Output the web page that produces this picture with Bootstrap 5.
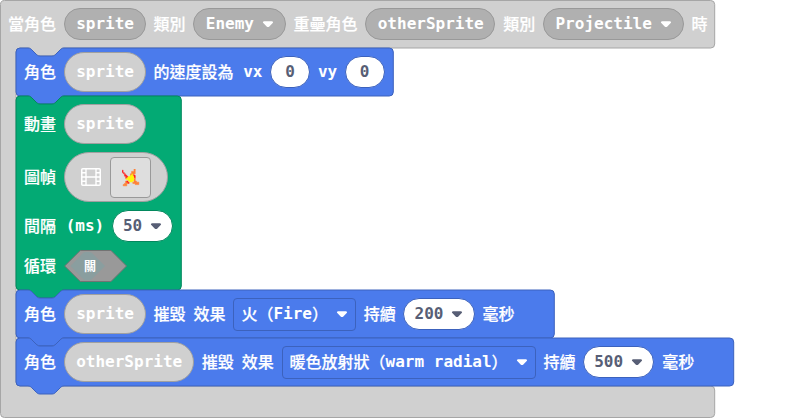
<!DOCTYPE html>
<html lang="zh-Hant">
<head>
<meta charset="utf-8">
<meta name="viewport" content="width=device-width, initial-scale=1">
<title>Blocks</title>
<link rel="stylesheet" href="https://cdn.jsdelivr.net/npm/bootstrap@5.3.0/dist/css/bootstrap.min.css">
<style>
body{background:#fff;font:600 16px/24px "DejaVu Sans Mono","Noto Sans CJK TC",monospace;color:#fff;overflow:hidden;white-space:nowrap}
.workspace{width:786px;height:418px}
.shape{position:absolute;left:0;top:0;overflow:visible;pointer-events:none}
.line{gap:7.9px;position:relative}
.zh{font-family:"Noto Sans CJK TC",sans-serif;font-weight:500;-webkit-text-stroke:.2px currentColor;line-height:22px;margin-bottom:2px}
.hat{height:48px;padding-left:8px}
.stack-in{padding-left:16px}
.stmt{height:48px;padding-left:8px}
.green-stmt{height:194px;padding:8px 0 8px 8px;gap:8px}
.pill{height:32px;padding:0 10.7px 0 11.3px;border:1px solid #999;border-radius:20px;background:#b0b0b0;gap:8px}
.var{height:40px;background:#d0d0d0;border-color:#a0a0a0}
.num{background:#fff;color:#575e75;border-color:#3c62bd;padding:0 10.2px;margin-left:-.4px}
.num.one{width:40px}
.num.green{border-color:#02885d}
.drop{height:33px;padding:0 7px;border:1px solid #3c62bd;border-radius:4px;gap:8px}
.frames{width:104px;height:50px;border-radius:25px;padding:0 16px 0 16px;gap:9px}
.thumb{width:41px;height:41px;border:1px solid #999;border-radius:4px;background:#dedede;padding:1px 0 0 2px}
.toggle{width:62.5px;height:32px;position:relative}
.toggle .state{font-size:12px;position:relative;padding-left:20px;line-height:32px;font-weight:600;-webkit-text-stroke:0}
</style>
<script src="https://cdn.jsdelivr.net/npm/bootstrap@5.3.0/dist/js/bootstrap.bundle.min.js"></script>
</head>
<body>
<svg width="0" height="0" class="position-absolute">
  <symbol id="arrow" viewBox="0 0 12 12"><path d="M2.2 3.200H9.800C11 3.200 11.500 4.300 10.700 5.100L7.100 8.700Q6 9.500 4.900 8.700L1.300 5.100C.5 4.300 1 3.200 2.200 3.200Z" fill="currentColor"/></symbol>
</svg>
<main class="workspace position-relative">
  <svg class="shape" width="786" height="418"><path d="M4.500 .5H710.700a4 4 0 0 1 4 4V44a4 4 0 0 1-4 4H64c-2 0-3 1-4 2l-4 4c-1 1-2 2-4 2H40c-2 0-3-1-4-2l-4-4c-1-1-2-2-4-2H20a4 4 0 0 0-4 4V382a4 4 0 0 0 4 4H710.700a4 4 0 0 1 4 4V413.500a4 4 0 0 1-4 4H4.500a4 4 0 0 1-4-4V4.500a4 4 0 0 1 4-4Z" fill="#d0d0d0" stroke="#a6a6a6"/></svg>
  <div class="hat line d-flex align-items-center">
    <span class="zh">當角色</span><span class="pill d-flex align-items-center">sprite</span><span class="zh">類別</span>
    <span class="pill d-flex align-items-center">Enemy<svg width="12" height="12"><use href="#arrow"/></svg></span>
    <span class="zh">重壘角色</span><span class="pill d-flex align-items-center">otherSprite</span><span class="zh">類別</span>
    <span class="pill d-flex align-items-center">Projectile<svg width="12" height="12"><use href="#arrow"/></svg></span><span class="zh">時</span>
  </div>
  <div class="stack-in d-flex flex-column">
    <section class="position-relative">
      <svg class="shape" width="378" height="56"><path d="M0 4a4 4 0 0 1 4-4H12c2 0 3 1 4 2l4 4c1 1 2 2 4 2H36c2 0 3-1 4-2l4-4c1-1 2-2 4-2H373.300a4 4 0 0 1 4 4V44a4 4 0 0 1-4 4H48c-2 0-3 1-4 2l-4 4c-1 1-2 2-4 2H24c-2 0-3-1-4-2l-4-4c-1-1-2-2-4-2H4a4 4 0 0 1-4-4Z" fill="#4b7bec" stroke="#3c62bd"/></svg>
      <div class="stmt line d-flex align-items-center"><span class="zh">角色</span><span class="pill var d-flex align-items-center">sprite</span><span class="d-flex align-items-center"><span class="zh">的速度設為</span>&nbsp;vx</span><span class="pill num one d-flex align-items-center justify-content-center">0</span><span>vy</span><span class="pill num one d-flex align-items-center justify-content-center">0</span></div>
    </section>
    <section class="position-relative">
      <svg class="shape" width="166" height="202"><path d="M0 4a4 4 0 0 1 4-4H12c2 0 3 1 4 2l4 4c1 1 2 2 4 2H36c2 0 3-1 4-2l4-4c1-1 2-2 4-2H161.300a4 4 0 0 1 4 4V190a4 4 0 0 1-4 4H48c-2 0-3 1-4 2l-4 4c-1 1-2 2-4 2H24c-2 0-3-1-4-2l-4-4c-1-1-2-2-4-2H4a4 4 0 0 1-4-4Z" fill="#03aa74" stroke="#02885d"/></svg>
      <div class="green-stmt d-flex flex-column">
        <div class="line d-flex align-items-center"><span class="zh">動畫</span><span class="pill var d-flex align-items-center">sprite</span></div>
        <div class="line d-flex align-items-center"><span class="zh">圖幀</span>
          <span class="pill var frames d-flex align-items-center">
            <svg width="20" height="18" viewBox="0 0 20 18" fill="none" stroke="#fff"><rect x=".75" y=".75" width="18.500" height="16.500" rx="1" stroke-width="1.500"/><path d="M5 1V17M15 1V17M5 9H15" stroke-width="1.400"/><path d="M1 4.700H5M1 9H5M1 13.300H5M15 4.700H19M15 9H19M15 13.300H19" stroke-width="1.400"/></svg>
            <span class="thumb d-flex align-items-center justify-content-center"><svg width="18" height="18" viewBox="0 0 15 15">
              <path d="M10 0h1v4h-1v2h-1v-1h-1v1h-1v-2h1v-2h2ZM10 6h1v4h1v1h2v2h-3v-1h-2v-1h1v-3h1v-1h-1ZM3 10h2v2h-1v2h-3v-1h1v-1h1Z" fill="#ff8135" stroke="#ff8135" stroke-width=".5"/>
              <path d="M0 1h1v2h1v1h1v1h1v1h1v1h-1v1h-1v-2h-1v-2h-1v-1h-1ZM10 5h1v2h-1ZM4 10h1v1h1v1h-1v-1h-1Z" fill="#ff2121" stroke="#ff2121" stroke-width=".3"/>
              <path d="M8 4h1v2h1v4h-1v1h-3v-1h-1v-1h-2v-1h1v-1h1v-1h2v-1h1Z" fill="#fff609"/></svg></span>
          </span></div>
        <div class="line d-flex align-items-center"><span class="d-flex align-items-center"><span class="zh">間隔</span>&nbsp;(ms)</span><span class="pill num green d-flex align-items-center">50<svg width="12" height="12"><use href="#arrow"/></svg></span></div>
        <div class="line d-flex align-items-center"><span class="zh">循環</span><span class="toggle"><svg class="shape" width="62.500" height="32"><path d="M.7 16L16.300 .5H47L62.500 16L47 31.500H16.300Z" fill="#999" stroke="#737373"/><path d="M6.500 16L19 3Q20 2 22 2H25Q27 2 28 3L41 16L28 29Q27 30 25 30H22Q20 30 19 29Z" fill="#8a9e9f"/></svg><span class="state zh d-block">關</span></span></div>
      </div>
    </section>
    <section class="position-relative">
      <svg class="shape" width="539" height="56"><path d="M0 4a4 4 0 0 1 4-4H12c2 0 3 1 4 2l4 4c1 1 2 2 4 2H36c2 0 3-1 4-2l4-4c1-1 2-2 4-2H534.300a4 4 0 0 1 4 4V44a4 4 0 0 1-4 4H48c-2 0-3 1-4 2l-4 4c-1 1-2 2-4 2H24c-2 0-3-1-4-2l-4-4c-1-1-2-2-4-2H4a4 4 0 0 1-4-4Z" fill="#4b7bec" stroke="#3c62bd"/></svg>
      <div class="stmt line d-flex align-items-center"><span class="zh">角色</span><span class="pill var d-flex align-items-center">sprite</span><span class="zh">摧毀</span><span class="zh">效果</span><span class="drop d-flex align-items-center"><span class="d-flex align-items-center"><span class="zh">火（</span>Fire<span class="zh">）</span></span><svg width="12" height="12"><use href="#arrow"/></svg></span><span class="zh">持續</span><span class="pill num d-flex align-items-center">200<svg width="12" height="12"><use href="#arrow"/></svg></span><span class="zh">毫秒</span></div>
    </section>
    <section class="position-relative">
      <svg class="shape" width="719" height="56"><path d="M0 4a4 4 0 0 1 4-4H12c2 0 3 1 4 2l4 4c1 1 2 2 4 2H36c2 0 3-1 4-2l4-4c1-1 2-2 4-2H713.700a4 4 0 0 1 4 4V44a4 4 0 0 1-4 4H48c-2 0-3 1-4 2l-4 4c-1 1-2 2-4 2H24c-2 0-3-1-4-2l-4-4c-1-1-2-2-4-2H4a4 4 0 0 1-4-4Z" fill="#4b7bec" stroke="#3c62bd"/></svg>
      <div class="stmt line d-flex align-items-center"><span class="zh">角色</span><span class="pill var d-flex align-items-center">otherSprite</span><span class="zh">摧毀</span><span class="zh">效果</span><span class="drop d-flex align-items-center"><span class="d-flex align-items-center"><span class="zh">暖色放射狀（</span>warm radial<span class="zh">）</span></span><svg width="12" height="12"><use href="#arrow"/></svg></span><span class="zh">持續</span><span class="pill num d-flex align-items-center">500<svg width="12" height="12"><use href="#arrow"/></svg></span><span class="zh">毫秒</span></div>
    </section>
  </div>
</main>
</body>
</html>
